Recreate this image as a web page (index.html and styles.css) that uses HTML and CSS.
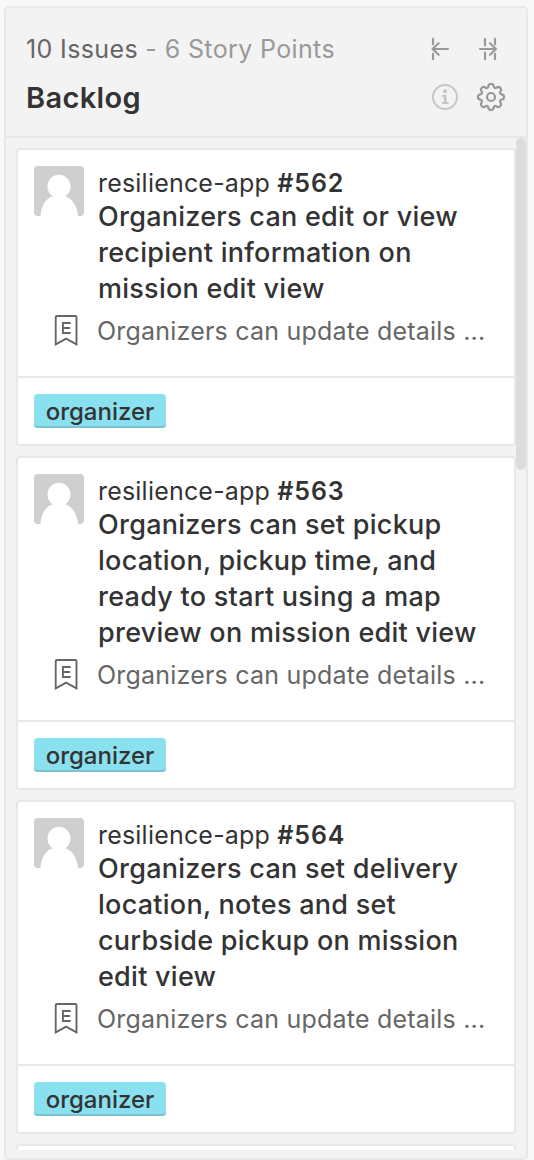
FILE: index.html
```html
<!DOCTYPE html>
<html lang="en">
<head>
<meta charset="utf-8">
<title>Backlog</title>
<link rel="stylesheet" href="styles.css">
</head>
<body>
<svg class="defs" aria-hidden="true">
  <symbol id="avatar" viewBox="0 0 50 50">
    <rect width="50" height="50" fill="#cfcfcf"/>
    <ellipse cx="25" cy="20.500" rx="11.500" ry="11.800" fill="#fff"/>
    <path d="M6.500 50C7 38 13.500 31.500 19.500 30H30.500C36.500 31.500 43 38 44 50Z" fill="#fff"/>
  </symbol>
  <symbol id="epic" viewBox="0 0 24 32">
    <path d="M1.700 30.300V3.200Q1.700 2 2.900 2H21.300Q22.500 2 22.500 3.200V30.300L12.100 24.600Z" fill="none" stroke="#666" stroke-width="1.900"/>
    <path d="M16.700 9H8.900V19H16.700M8.900 14H16.200" fill="none" stroke="#666" stroke-width="1.900"/>
  </symbol>
</svg>
<main class="panel">
  <header class="head">
    <div class="row row-top">
      <p class="summary"><span class="issues">10 Issues</span> - 6 Story Points</p>
      <div class="actions">
        <svg class="move" width="20" height="26" viewBox="0 0 20 26"><path d="M3 2.800V8.200M3 17.800V23.200M18 13H2.500M8.700 7.200L2.500 13L8.700 18.800"/></svg>
        <svg class="move" width="20" height="26" viewBox="0 0 20 26"><path d="M7 2.800V9.500M7 16.500V23.200M17 2.800V8.200M17 17.800V23.200M2 13H18M12 7.200L18 13L12 18.800"/></svg>
      </div>
    </div>
    <div class="row row-name">
      <h1 class="name">Backlog</h1>
      <div class="actions tools">
        <svg class="info" width="26" height="26" viewBox="0 0 26 26"><circle cx="13" cy="13" r="12" fill="none" stroke="#c6c6c6" stroke-width="2"/><circle cx="13" cy="7.200" r="2" fill="#c6c6c6"/><path d="M10 10.800H14.600V18H16.500V20H10V18H11.800V12.800H10Z" fill="#c6c6c6"/></svg>
        <svg class="gear" width="30" height="30" viewBox="-15 -15 30 30"><path d="M-2.700 -10.800A2.750 2.750 0 0 1 2.700 -10.800A1.750 1.750 0 0 0 5.730 -9.540A2.750 2.750 0 0 1 9.540 -5.730A1.750 1.750 0 0 0 10.800 -2.700A2.750 2.750 0 0 1 10.800 2.700A1.750 1.750 0 0 0 9.540 5.730A2.750 2.750 0 0 1 5.730 9.540A1.750 1.750 0 0 0 2.700 10.800A2.750 2.750 0 0 1 -2.700 10.800A1.750 1.750 0 0 0 -5.730 9.540A2.750 2.750 0 0 1 -9.540 5.730A1.750 1.750 0 0 0 -10.800 2.700A2.750 2.750 0 0 1 -10.800 -2.700A1.750 1.750 0 0 0 -9.540 -5.730A2.750 2.750 0 0 1 -5.730 -9.540A1.750 1.750 0 0 0 -2.700 -10.800Z"/><circle r="4"/></svg>
      </div>
    </div>
  </header>
  <section class="list">
    <article class="card">
      <div class="body">
        <svg class="avatar"><use href="#avatar"/></svg>
        <div class="text">
          <p class="repo">resilience-app <b>#562</b></p>
          <h2 class="title">Organizers can edit or view<br>recipient information on<br>mission edit view</h2>
        </div>
      </div>
      <div class="parent"><svg class="epic"><use href="#epic"/></svg><span class="epic-name">Organizers can update details ...</span></div>
      <footer class="labels"><span class="label">organizer</span></footer>
    </article>
    <article class="card">
      <div class="body">
        <svg class="avatar"><use href="#avatar"/></svg>
        <div class="text">
          <p class="repo">resilience-app <b>#563</b></p>
          <h2 class="title">Organizers can set pickup<br>location, pickup time, and<br>ready to start using a map<br>preview on mission edit view</h2>
        </div>
      </div>
      <div class="parent"><svg class="epic"><use href="#epic"/></svg><span class="epic-name">Organizers can update details ...</span></div>
      <footer class="labels"><span class="label">organizer</span></footer>
    </article>
    <article class="card">
      <div class="body">
        <svg class="avatar"><use href="#avatar"/></svg>
        <div class="text">
          <p class="repo">resilience-app <b>#564</b></p>
          <h2 class="title">Organizers can set delivery<br>location, notes and set<br>curbside pickup on mission<br>edit view</h2>
        </div>
      </div>
      <div class="parent"><svg class="epic"><use href="#epic"/></svg><span class="epic-name">Organizers can update details ...</span></div>
      <footer class="labels"><span class="label">organizer</span></footer>
    </article>
    <article class="card next"></article>
    <div class="thumb"></div>
  </section>
</main>
</body>
</html>
```
FILE: styles.css
```css
* { box-sizing: border-box; }
body {
  margin: 0;
  padding: 6px 6px 0 4px;
  height: 1160px;
  overflow: hidden;
  background: #f8f8f8;
  color: #333;
  font-family: Inter, "Liberation Sans", sans-serif;
}
p, h1, h2 { margin: 0; white-space: nowrap; }
.defs { position: absolute; width: 0; height: 0; }
.panel {
  display: flex;
  flex-direction: column;
  height: 1154px;
  padding-bottom: 8px;
  border: 2px solid #e8e8e8;
  border-radius: 5px;
  background: #f3f3f3;
}
.head {
  flex: none;
  height: 130px;
  padding: 21px 20px 0;
  border-bottom: 2px solid #e8e8e8;
}
.row { display: flex; align-items: center; justify-content: space-between; }
.row-top { height: 40px; }
.row-name { height: 56px; }
.summary { font-size: 25px; line-height: 40px; letter-spacing: 0.37px; color: #999; }
.issues { color: #666; }
.name { padding-top: 1px; font-size: 29px; line-height: 56px; font-weight: 600; letter-spacing: 0.35px; }
.actions { display: flex; align-items: center; gap: 28px; padding-right: 8px; }
.tools { gap: 18px; padding-right: 0; }
.move, .gear { fill: none; stroke: #999; stroke-width: 2.2; stroke-linecap: round; stroke-linejoin: round; }
.list {
  position: relative;
  flex: 1;
  min-height: 0;
  padding: 10px 10px 0;
  overflow: hidden;
}
.card {
  margin-bottom: 10px;
  border: 2px solid #e8e8e8;
  border-radius: 4px;
  background: #fff;
}
.next { height: 300px; }
.body { display: flex; gap: 14px; padding: 16px 16px 0; }
.avatar { flex: none; width: 50px; height: 50px; border-radius: 4px; }
.repo { height: 33px; font-size: 25px; line-height: 34px; letter-spacing: 0.2px; }
.repo b { font-weight: 600; letter-spacing: 0.9px; }
.title { font-size: 27px; line-height: 36px; font-weight: 500; letter-spacing: 0.26px; }
.parent { display: flex; height: 69px; padding: 7px 0 0 36px; }
.epic { flex: none; width: 24px; height: 32px; margin-right: 19px; }
.epic-name { color: #666; font-size: 25px; line-height: 34px; letter-spacing: 0.21px; white-space: nowrap; }
.labels { height: 68px; padding: 16px; border-top: 2px solid #e8e8e8; }
.label {
  display: block;
  width: 132px;
  height: 34px;
  border-radius: 4px;
  background: #8ae0ef;
  box-shadow: inset 0 -2px #7bc3d0;
  font-size: 24px;
  line-height: 36px;
  font-weight: 500;
  text-align: center;
}
.thumb {
  position: absolute;
  top: 0;
  right: 0;
  width: 10px;
  height: 332px;
  border-radius: 5px;
  background: #dcdcdc;
}
```
